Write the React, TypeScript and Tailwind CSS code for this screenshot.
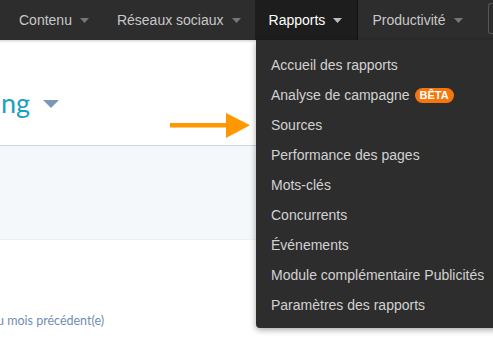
import React from "react";

const Caret = ({ color }: { color: string }) => (
  <svg width="9" height="5" viewBox="0 0 9 5" className="ml-[8px] mt-[1px]">
    <path d="M0 0 L9 0 L4.5 5 Z" fill={color} />
  </svg>
);

const navItems = [
  { label: "Contenu", active: false },
  { label: "Réseaux sociaux", active: false },
  { label: "Rapports", active: true },
  { label: "Productivité", active: false },
];

const menu = [
  "Accueil des rapports",
  "Analyse de campagne",
  "Sources",
  "Performance des pages",
  "Mots-clés",
  "Concurrents",
  "Événements",
  "Module complémentaire Publicités",
  "Paramètres des rapports",
];

export default function App() {
  return (
    <div className="relative w-[493px] h-[364px] overflow-hidden bg-white">
      <nav
        className="flex h-[40px] bg-[#2d2d2d] pl-[5px] relative z-10"
        style={{ fontFamily: '"Liberation Sans", Arial, sans-serif' }}
      >
        {navItems.map((n) => (
          <div
            key={n.label}
            className={`flex items-center text-[14px] ${
              n.active
                ? "bg-[#1d1d1d] text-white border-r border-[#111] pl-[14px] pr-[15px]"
                : "text-[#c8c8c8] px-[14px]"
            }`}
          >
            <span>{n.label}</span>
            <Caret color={n.active ? "#bbbbbb" : "#777777"} />
          </div>
        ))}
        <div className="ml-auto mt-[3px] h-[31px] w-[5px] rounded-l-[3px] border border-r-0 border-[#555]" />
      </nav>
      <div className="h-[3px] bg-gradient-to-b from-[#d8d8d8] to-white absolute top-[40px] left-0 w-full" />

      <main style={{ fontFamily: 'Lato, "Open Sans", sans-serif' }}>
        <div className="h-[106px] border-b border-[#cbd6e2] flex items-start pt-[45px] pl-[1px]">
          <span className="text-[27px] leading-[36px] text-[#1aa0c2]">ng</span>
          <svg width="16" height="8" viewBox="0 0 16 8" className="ml-[13px] mt-[15px]">
            <path d="M0 0 L16 0 L8 8 Z" fill="#7c98b6" />
          </svg>
        </div>
        <div className="h-[94px] bg-[#f5f8fa] border-b border-[#eef1f4]" />
        <div className="pt-[72px] text-[12.5px] text-[#6f8db3] ml-[-3px]">u mois précédent(e)</div>
      </main>

      <svg className="absolute left-[170px] top-[112px]" width="82" height="27" viewBox="0 0 82 27">
        <rect x="0" y="11" width="60" height="4.5" fill="#ff9800" />
        <path d="M56 1 L80 13.2 L56 26 Z" fill="#ff9800" />
      </svg>

      <div
        className="absolute left-[256px] top-[40px] w-[250px] bg-[#2d2d2d] rounded-bl-[4px] pt-[10px] pb-[8px] pl-[15px] shadow-[0_2px_6px_rgba(0,0,0,0.35)] z-20"
        style={{ fontFamily: '"Liberation Sans", Arial, sans-serif' }}
      >
        {menu.map((m) => (
          <div key={m} className="h-[30px] flex items-center text-[14px] text-[#d2d2d2] whitespace-nowrap">
            <span>{m}</span>
            {m === "Analyse de campagne" && (
              <span className="ml-[5px] rounded-full bg-[#f5760b] text-white text-[11px] font-bold leading-[14px] px-[5px] h-[15px] flex items-center">
                BÊTA
              </span>
            )}
          </div>
        ))}
      </div>
    </div>
  );
}
